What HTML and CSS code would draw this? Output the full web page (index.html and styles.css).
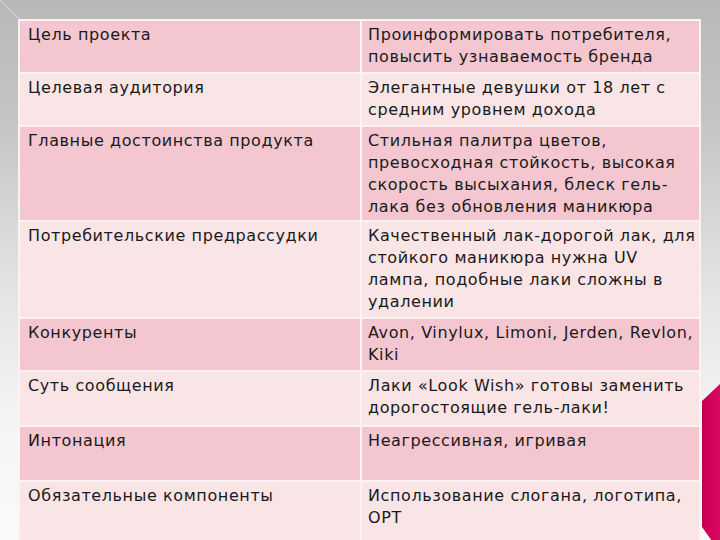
FILE: index.html
```html
<!DOCTYPE html>
<html lang="ru">
<head>
<meta charset="utf-8">
<link rel="stylesheet" href="styles.css">
</head>
<body>
<div class="slide">
  <div class="corner"></div>
  <table class="brief">
    <tr class="dark"><td class="k">Цель проекта</td><td class="v">Проинформировать потребителя,<br>повысить узнаваемость бренда</td></tr>
    <tr class="light"><td class="k">Целевая аудитория</td><td class="v">Элегантные девушки от 18 лет с<br>средним уровнем дохода</td></tr>
    <tr class="dark compact"><td class="k">Главные достоинства продукта</td><td class="v">Стильная палитра цветов,<br>превосходная стойкость, высокая<br>скорость высыхания, блеск гель-<br>лака без обновления маникюра</td></tr>
    <tr class="light"><td class="k">Потребительские предрассудки</td><td class="v">Качественный лак-дорогой лак, для<br>стойкого маникюра нужна UV<br>лампа, подобные лаки сложны в<br>удалении</td></tr>
    <tr class="dark"><td class="k">Конкуренты</td><td class="v">Avon, Vinylux, Limoni, Jerden, Revlon,<br>Kiki</td></tr>
    <tr class="light roomy"><td class="k">Суть сообщения</td><td class="v">Лаки «Look Wish» готовы заменить<br>дорогостоящие гель-лаки!</td></tr>
    <tr class="dark roomy"><td class="k">Интонация</td><td class="v">Неагрессивная, игривая<br>&nbsp;</td></tr>
    <tr class="light last"><td class="k">Обязательные компоненты</td><td class="v">Использование слогана, логотипа,<br>OPT</td></tr>
  </table>
  <svg class="chevron" width="20" height="157" viewBox="0 0 20 157">
    <defs>
      <linearGradient id="cg" x1="0" y1="0" x2="1" y2="0">
        <stop offset="0" stop-color="#b8004c"/>
        <stop offset="0.25" stop-color="#d0005a"/>
        <stop offset="1" stop-color="#d8075f"/>
      </linearGradient>
    </defs>
    <polygon points="2,17 20,0 20,157 12,157 2,143" fill="url(#cg)"/>
  </svg>
</div>
</body>
</html>
```
FILE: styles.css
```css
html, body {
  margin: 0;
  padding: 0;
}
body {
  width: 720px;
  height: 540px;
  overflow: hidden;
  font-family: "DejaVu Sans", "Liberation Sans", sans-serif;
}
.slide {
  position: relative;
  width: 720px;
  height: 540px;
  box-sizing: border-box;
  padding: 19px 0 0 18px;
  background: linear-gradient(to bottom, #b8b8b8 0, #c4c4c4 120px, #e2e2e2 280px, #f4f4f4 420px, #fafafa 540px);
}
.corner {
  position: absolute;
  left: 0;
  top: 0;
  width: 28px;
  height: 28px;
  background: linear-gradient(45deg, transparent 49%, rgba(255,255,255,0.35) 50%, transparent 53%);
}
.brief {
  border-collapse: collapse;
  width: 683px;
  table-layout: fixed;
  border: 2px solid #fdf2f3;
}
.brief td {
  border: 2px solid #fdf2f3;
  vertical-align: top;
  font-size: 16px;
  letter-spacing: 0.6px;
  line-height: 22px;
  color: #1a1a1a;
  padding: 3px 2px 4px 8px;
  white-space: nowrap;
  overflow: hidden;
}
.brief td.k {
  width: 330px;
}
.brief td.v {
  padding-left: 6px;
}
.brief tr.compact td {
  padding-bottom: 2px;
}
.brief tr.roomy td {
  padding-bottom: 6px;
}
.brief tr.last td {
  padding-bottom: 12px;
}
.dark td {
  background: #f4c6cf;
}
.light td {
  background: #f9e4e6;
}
.chevron {
  position: absolute;
  right: 0;
  top: 384px;
}
```
